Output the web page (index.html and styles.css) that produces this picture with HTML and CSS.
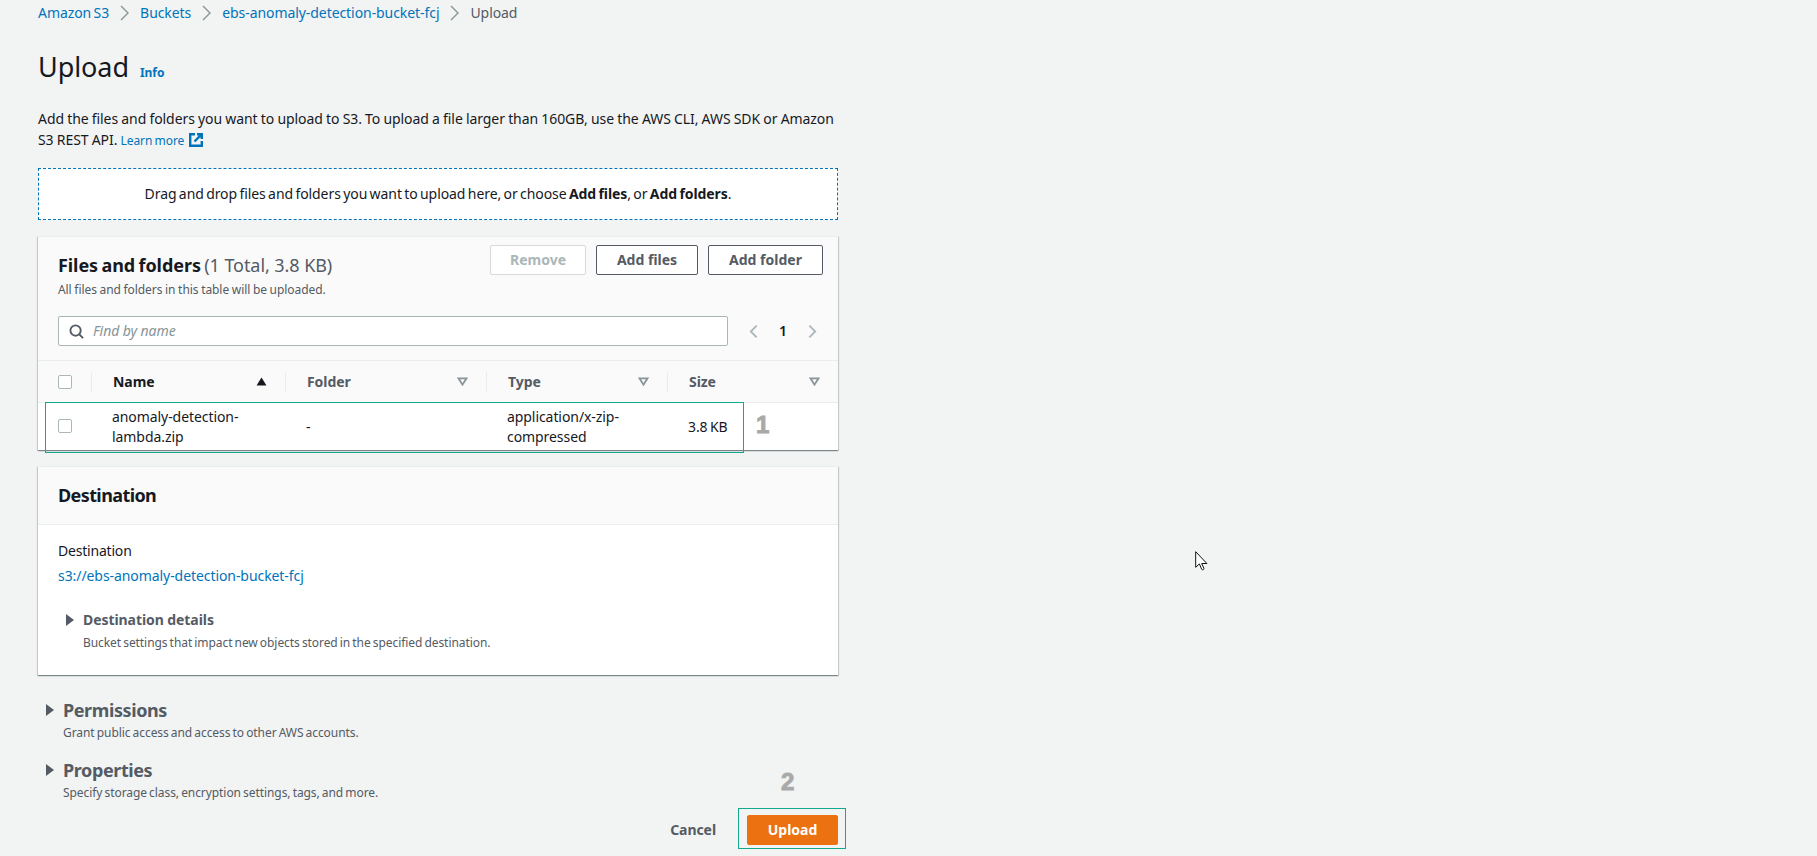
FILE: index.html
```html
<!DOCTYPE html>
<html lang="en">
<head>
<meta charset="utf-8">
<title>Upload</title>
<link rel="stylesheet" href="styles.css">
</head>
<body>
<main class="page">
  <nav class="crumbs">
    <a>Amazon S3</a>
    <svg class="crumb-sep" viewBox="0 0 10 16"><path d="M1.5 1l7 7-7 7"/></svg>
    <a>Buckets</a>
    <svg class="crumb-sep" viewBox="0 0 10 16"><path d="M1.5 1l7 7-7 7"/></svg>
    <a>ebs-anomaly-detection-bucket-fcj</a>
    <svg class="crumb-sep" viewBox="0 0 10 16"><path d="M1.5 1l7 7-7 7"/></svg>
    <span>Upload</span>
  </nav>

  <header class="title-row">
    <h1>Upload</h1>
    <a class="info">Info</a>
  </header>

  <p class="intro">Add the files and folders you want to upload to S3. To upload a file larger than 160GB, use the AWS CLI, AWS SDK or Amazon S3 REST API. <a class="small-link">Learn more</a><svg class="ext" viewBox="0 0 14 14"><path d="M6 1.2H1.2v11.6h11.6V8"/><path d="M8 1.2h4.8V6M12.8 1.2L5.5 8.5"/></svg></p>

  <div class="dropzone"><span>Drag and drop files and folders you want to upload here, or choose <b>Add files</b>, or <b>Add folders</b>.</span></div>

  <section class="card files">
    <div class="files-head">
      <div class="files-title">
        <h2>Files and folders <span class="count">(1 Total, 3.8 KB)</span></h2>
        <p class="note">All files and folders in this table will be uploaded.</p>
      </div>
      <div class="actions">
        <button class="btn btn-disabled">Remove</button>
        <button class="btn btn-add-files">Add files</button>
        <button class="btn btn-add-folder">Add folder</button>
      </div>
    </div>
    <div class="tools">
      <div class="search">
        <svg class="search-icon" viewBox="0 0 16 16"><circle cx="7" cy="7" r="5.5"/><path d="M11 11l4 4"/></svg>
        <span>Find by name</span>
      </div>
      <div class="pager">
        <svg viewBox="0 0 10 16"><path d="M8.5 1.5L2 8l6.5 6.5"/></svg>
        <b>1</b>
        <svg viewBox="0 0 10 16"><path d="M1.5 1.5L8 8l-6.5 6.5"/></svg>
      </div>
    </div>
    <div class="table">
      <div class="grid thead">
        <div class="th th-check"><i class="check"></i></div>
        <div class="th active"><span>Name</span><svg class="sort" viewBox="0 0 12 10"><path class="solid" d="M6 .5l5.5 9H.5z"/></svg></div>
        <div class="th"><span>Folder</span><svg class="sort" viewBox="0 0 12 10"><path d="M1.5 1.5h9L6 8.5z"/></svg></div>
        <div class="th"><span>Type</span><svg class="sort" viewBox="0 0 12 10"><path d="M1.5 1.5h9L6 8.5z"/></svg></div>
        <div class="th th-last"><span>Size</span><svg class="sort" viewBox="0 0 12 10"><path d="M1.5 1.5h9L6 8.5z"/></svg></div>
      </div>
      <div class="grid tbody">
        <div class="td td-check"><i class="check"></i></div>
        <div class="td td-name">anomaly-detection-<br>lambda.zip</div>
        <div class="td">-</div>
        <div class="td">application/x-zip-<br>compressed</div>
        <div class="td">3.8 KB</div>
      </div>
      <div class="mark mark-row"></div>
      <div class="digit digit-1">1</div>
    </div>
  </section>

  <section class="card dest">
    <h2 class="dest-head">Destination</h2>
    <div class="dest-body">
      <div class="dest-label">Destination</div>
      <a class="dest-link">s3://ebs-anomaly-detection-bucket-fcj</a>
      <div class="expander inner">
        <svg class="caret" viewBox="0 0 8 12"><path d="M0 0l8 6-8 6z"/></svg>
        <h3>Destination details</h3>
      </div>
      <p class="desc inner-desc">Bucket settings that impact new objects stored in the specified destination.</p>
    </div>
  </section>

  <section class="outer">
    <div class="expander">
      <svg class="caret" viewBox="0 0 8 12"><path d="M0 0l8 6-8 6z"/></svg>
      <h2>Permissions</h2>
    </div>
    <p class="desc">Grant public access and access to other AWS accounts.</p>
  </section>
  <section class="outer second">
    <div class="expander">
      <svg class="caret" viewBox="0 0 8 12"><path d="M0 0l8 6-8 6z"/></svg>
      <h2>Properties</h2>
    </div>
    <p class="desc">Specify storage class, encryption settings, tags, and more.</p>
  </section>

  <footer class="foot">
    <a class="cancel">Cancel</a>
    <div class="upload-wrap">
      <button class="upload">Upload</button>
      <div class="mark mark-upload"></div>
      <div class="digit digit-2">2</div>
    </div>
  </footer>
</main>
<svg class="cursor" viewBox="0 0 13 20"><path d="M.7.7v15.6l3.7-3.4 2.3 5.4c.5 1 2.6.4 2.2-.9l-2.2-4.9h5.2z"/></svg>
</body>
</html>
```

FILE: styles.css
```css
* { box-sizing: border-box; }
html, body { margin: 0; height: 100%; overflow: hidden; }
body {
  position: relative;
  background: #f2f3f3;
  color: #16191f;
  font: 14px/20px "Noto Sans", "Open Sans", sans-serif;
  letter-spacing: -.005em;
  word-spacing: -.085em;
}
a { color: #0073bb; text-decoration: none; }
h1, h2, h3, p { margin: 0; }
.page { width: 800px; margin-left: 38px; display: flex; flex-direction: column; }

.crumbs { display: flex; align-items: center; height: 20px; margin-top: 3px; gap: 10px; white-space: nowrap; }
.crumbs span { color: #545b64; }
.crumb-sep { width: 11px; height: 16px; fill: none; stroke: #879596; stroke-width: 1.4; }

.title-row { display: flex; align-items: baseline; gap: 11px; margin-top: 26px; height: 36px; }
h1 { font-size: 27px; line-height: 36px; font-weight: 400; }
.info { font-size: 12px; font-weight: 700; }

.intro { margin-top: 23px; height: 41px; line-height: 21px; word-spacing: -.025em; }
.small-link { font-size: 12px; word-spacing: -.05em; letter-spacing: -.1px; }
.ext { width: 14px; height: 14px; vertical-align: -2px; margin-left: 5px; fill: none; stroke: #0073bb; stroke-width: 2.4; }

.dropzone {
  margin-top: 19px; height: 52px;
  display: flex; align-items: center; justify-content: center;
  background: #fff; border: 1px dashed #0073bb;
}

.card { background: #fff; box-shadow: 0 1px 1px 0 rgba(0,28,36,.3), 1px 1px 1px 0 rgba(0,28,36,.15), -1px 1px 1px 0 rgba(0,28,36,.15); border-top: 1px solid #eaeded; }
.files { margin-top: 16px; height: 214px; background: #fafafa; }
.files-head { display: flex; justify-content: space-between; padding: 8px 15px 0 20px; height: 70px; }
.files-title h2 { font-size: 18px; line-height: 24px; font-weight: 700; margin-top: 8px; }
.count { font-weight: 400; color: #545b64; word-spacing: 0; }
.note { font-size: 12px; line-height: 16px; color: #545b64; margin-top: 5px; word-spacing: -.03em; }
.actions { display: flex; gap: 10px; }
.btn { height: 30px; border: 1px solid #545b64; border-radius: 2px; background: #fff; color: #545b64; font: 700 14px/20px "Noto Sans", sans-serif; padding: 0; }
.btn-disabled { width: 96px; border-color: #d5dbdb; color: #aab7b8; }
.btn-add-files { width: 102px; }
.btn-add-folder { width: 115px; }

.tools { display: flex; align-items: center; padding: 0 0 0 20px; height: 30px; margin-top: 9px; }
.search { width: 670px; height: 30px; display: flex; align-items: center; gap: 9px; background: #fff; border: 1px solid #aab7b8; border-radius: 2px; padding-left: 10px; color: #879596; font-style: italic; word-spacing: 0; }
.search-icon { width: 15px; height: 15px; fill: none; stroke: #545b64; stroke-width: 2; }
.pager { display: flex; align-items: center; margin-left: 21px; gap: 21px; color: #16191f; }
.pager svg { width: 9px; height: 15px; fill: none; stroke: #aab7b8; stroke-width: 2; }
.pager b { font-size: 14px; font-weight: 600; }

.table { position: relative; margin-top: 14px; border-top: 1px solid #eaeded; }
.grid { display: grid; grid-template-columns: 54px 194px 201px 181px 170px; }
.thead { height: 42px; border-bottom: 1px solid #eaeded; align-items: center; }
.th { position: relative; height: 20px; padding: 0 18px 0 21px; display: flex; align-items: center; justify-content: space-between; font-weight: 700; color: #545b64; border-right: 1px solid #eaeded; }
.th.active { color: #16191f; }
.th-check { padding: 0 0 0 20px; justify-content: flex-start; }
.th-last { border-right: 0; }
.sort { width: 11px; height: 9px; fill: none; stroke: #879596; stroke-width: 2; }
.sort .solid { fill: #16191f; stroke: none; }
.check { display: block; width: 14px; height: 14px; border: 1px solid #aab7b8; border-radius: 2px; background: #fff; }

.tbody { height: 47px; background: #fff; align-items: center; }
.td { padding-left: 20px; }
.td-name { padding-left: 20px; }
.td-check { padding-left: 20px; margin-top: -1px; }

.mark { position: absolute; border: 1px solid #12a98c; pointer-events: none; }
.mark-row { left: 7px; top: 41px; width: 699px; height: 51px; }
.digit { position: absolute; font: 700 24px/24px "Liberation Sans", sans-serif; -webkit-text-stroke: .9px #a9a9a9; color: #a9a9a9; }
.digit-1 { left: 718px; top: 52px; }

.dest { margin-top: 16px; height: 209px; }
.dest-head { height: 58px; padding: 0 20px; font-size: 18px; line-height: 57px; font-weight: 700; letter-spacing: -.6px; background: #fafafa; border-bottom: 1px solid #eaeded; }
.dest-body { padding: 16px 20px 0; }
.dest-label { line-height: 20px; letter-spacing: -.2px; }
.dest-link { display: block; margin-top: 5px; line-height: 20px; }
.expander { display: flex; align-items: center; }
.caret { width: 8px; height: 12px; fill: #545b64; flex: none; }
.expander h3 { font-size: 14px; line-height: 20px; font-weight: 700; color: #545b64; margin-left: 9px; word-spacing: 0; }
.expander.inner { margin-top: 24px; padding-left: 8px; }
.desc { font-size: 12px; line-height: 16px; color: #545b64; word-spacing: -.075em; }
.inner-desc { margin: 5px 0 0 25px; }

.outer { margin-top: 23px; padding-left: 8px; }
.outer h2 { font-size: 18px; line-height: 24px; font-weight: 700; letter-spacing: -.4px; color: #545b64; margin-left: 9px; }
.outer .desc { margin: 3px 0 0 17px; }
.outer.second { margin-top: 17px; }

.foot { display: flex; justify-content: flex-end; align-items: center; margin-top: 14px; }
.cancel { font-weight: 700; color: #545b64; margin-right: 31px; }
.upload-wrap { position: relative; }
.upload { display: block; width: 91px; height: 30px; background: #ec7211; border: 1px solid #ec7211; border-radius: 2px; color: #fff; font: 700 14px/20px "Noto Sans", sans-serif; padding: 0; }
.mark-upload { left: -9px; top: -7px; width: 108px; height: 41px; }
.digit-2 { left: 34px; top: -45px; }

.cursor { position: absolute; left: 1195px; top: 551px; width: 13px; height: 20px; fill: #fff; stroke: #111; stroke-width: 1; }
```
